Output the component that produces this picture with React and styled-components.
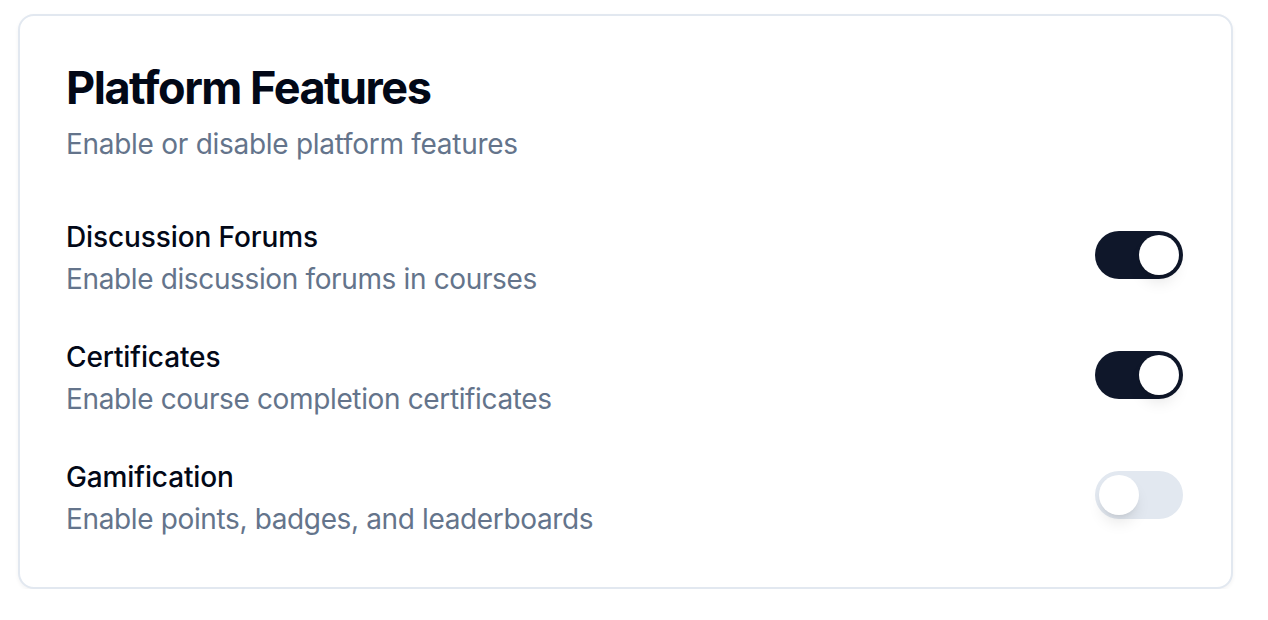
import styled, { createGlobalStyle } from 'styled-components';
import { useState } from 'react';

const GlobalStyle = createGlobalStyle`
  * { box-sizing: border-box; }
  body {
    margin: 0;
    background: #ffffff;
    font-family: Inter, "Noto Sans", sans-serif;
    -webkit-font-smoothing: antialiased;
  }
`;

const Page = styled.div`
  padding: 14px 35px 0 18px;
`;

const Card = styled.section`
  border: 2px solid #e2e8f0;
  border-radius: 16px;
  background: #ffffff;
  box-shadow: 0 2px 4px rgba(15, 23, 42, 0.05);
  padding: 48px 48px 48px 46px;
`;

const Header = styled.header`
  display: flex;
  flex-direction: column;
  gap: 12px;
  margin-bottom: 53px;
`;

const Title = styled.h2`
  margin: 0;
  font-size: 45px;
  line-height: 48px;
  font-weight: 700;
  letter-spacing: -0.033em;
  color: #020817;
`;

const Subtitle = styled.p`
  margin: 0;
  font-size: 28px;
  line-height: 40px;
  letter-spacing: -0.01em;
  color: #64748b;
`;

const List = styled.div`
  display: flex;
  flex-direction: column;
  gap: 38px;
`;

const Row = styled.div`
  display: flex;
  align-items: center;
  justify-content: space-between;
`;

const Text = styled.div`
  display: flex;
  flex-direction: column;
  gap: 2px;
`;

const Label = styled.label`
  font-size: 28px;
  line-height: 40px;
  font-weight: 500;
  letter-spacing: -0.004em;
  color: #020817;
`;

const Description = styled.p`
  margin: 0;
  font-size: 28px;
  line-height: 40px;
  letter-spacing: -0.013em;
  color: #64748b;
`;

const Track = styled.button`
  width: 88px;
  height: 48px;
  padding: 0;
  margin-top: -6px;
  border: 4px solid transparent;
  border-radius: 999px;
  background: ${(p) => (p.$on ? '#0f172a' : '#e2e8f0')};
  cursor: pointer;
  flex-shrink: 0;
  display: flex;
  align-items: center;
`;

const Thumb = styled.span`
  display: block;
  width: 40px;
  height: 40px;
  border-radius: 50%;
  background: #ffffff;
  box-shadow: 0 10px 15px -3px rgba(0, 0, 0, 0.1), 0 4px 6px -4px rgba(0, 0, 0, 0.1);
  transform: translateX(${(p) => (p.$on ? '40px' : '0')});
  transition: transform 0.15s;
`;

const features = [
  { id: 'forums', label: 'Discussion Forums', desc: 'Enable discussion forums in courses', on: true },
  { id: 'certs', label: 'Certificates', desc: 'Enable course completion certificates', on: true },
  { id: 'gamify', label: 'Gamification', desc: 'Enable points, badges, and leaderboards', on: false },
];

const App = () => {
  const [state, setState] = useState(
    Object.fromEntries(features.map((f) => [f.id, f.on]))
  );

  const toggle = (id) => setState((s) => ({ ...s, [id]: !s[id] }));

  return (
    <Page>
      <GlobalStyle />
      <Card>
        <Header>
          <Title>Platform Features</Title>
          <Subtitle>Enable or disable platform features</Subtitle>
        </Header>
        <List>
          {features.map((f) => (
            <Row key={f.id}>
              <Text>
                <Label htmlFor={f.id}>{f.label}</Label>
                <Description>{f.desc}</Description>
              </Text>
              <Track
                id={f.id}
                role="switch"
                aria-checked={state[f.id]}
                $on={state[f.id]}
                onClick={() => toggle(f.id)}
              >
                <Thumb $on={state[f.id]} />
              </Track>
            </Row>
          ))}
        </List>
      </Card>
    </Page>
  );
};

export default App;
